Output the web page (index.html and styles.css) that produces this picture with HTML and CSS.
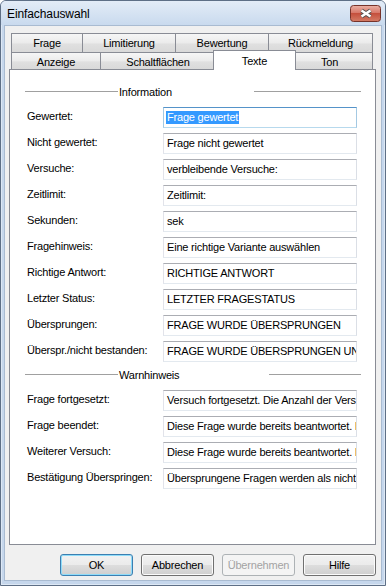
FILE: index.html
```html
<!DOCTYPE html>
<html>
<head>
    <title>Einfachauswahl</title>
    <link rel="stylesheet" href="styles.css">
</head>
<body>
<div class="window">
    <div class="titlebar">
        <span class="title">Einfachauswahl</span>
        <span class="close">
            <svg width="31" height="17" viewBox="0 0 31 17">
                <defs>
                    <linearGradient id="closebg" x1="0" y1="0" x2="0" y2="1">
                        <stop offset="0" stop-color="#eab1a5"/>
                        <stop offset="0.45" stop-color="#d8796a"/>
                        <stop offset="0.5" stop-color="#c5503d"/>
                        <stop offset="1" stop-color="#d47c66"/>
                    </linearGradient>
                </defs>
                <rect x="0.5" y="0.5" width="30" height="16" rx="3" fill="url(#closebg)" stroke="#76332a"/>
                <path d="M11.5 5.5 L20.5 11.5 M20.5 5.5 L11.5 11.5" stroke="#505050" stroke-width="4.4"/>
                <path d="M11.5 5.5 L20.5 11.5 M20.5 5.5 L11.5 11.5" stroke="#ffffff" stroke-width="2.6"/>
            </svg>
        </span>
    </div>
    <div class="dialog">
        <div class="tabs">
            <div class="tab-row back">
                <div class="tab">Frage</div>
                <div class="tab">Limitierung</div>
                <div class="tab">Bewertung</div>
                <div class="tab">Rückmeldung</div>
            </div>
            <div class="tab-row front">
                <div class="tab">Anzeige</div>
                <div class="tab">Schaltflächen</div>
                <div class="tab active">Texte</div>
                <div class="tab ton">Ton</div>
            </div>
        </div>
        <div class="panel">
            <div class="sep info">
                <span class="sep-line left"></span>
                <span class="sep-text">Information</span>
                <span class="sep-line right"></span>
            </div>
            <div class="fields">
                <label>Gewertet:</label>
                <div class="box focus"><span class="sel">Frage gewertet</span></div>
                <label>Nicht gewertet:</label>
                <div class="box">Frage nicht gewertet</div>
                <label>Versuche:</label>
                <div class="box">verbleibende Versuche:</div>
                <label>Zeitlimit:</label>
                <div class="box">Zeitlimit:</div>
                <label>Sekunden:</label>
                <div class="box">sek</div>
                <label>Fragehinweis:</label>
                <div class="box">Eine richtige Variante auswählen</div>
                <label>Richtige Antwort:</label>
                <div class="box">RICHTIGE ANTWORT</div>
                <label>Letzter Status:</label>
                <div class="box">LETZTER FRAGESTATUS</div>
                <label>Übersprungen:</label>
                <div class="box">FRAGE WURDE ÜBERSPRUNGEN</div>
                <label>Überspr./nicht bestanden:</label>
                <div class="box">FRAGE WURDE ÜBERSPRUNGEN UND NICHT BESTANDEN</div>
            </div>
            <div class="sep warn">
                <span class="sep-line left"></span>
                <span class="sep-text">Warnhinweis</span>
                <span class="sep-line right"></span>
            </div>
            <div class="fields">
                <label>Frage fortgesetzt:</label>
                <div class="box">Versuch fortgesetzt. Die Anzahl der Versuche wurde verringert.</div>
                <label>Frage beendet:</label>
                <div class="box">Diese Frage wurde bereits beantwortet. Ihre Antwort kann nicht geändert werden.</div>
                <label>Weiterer Versuch:</label>
                <div class="box">Diese Frage wurde bereits beantwortet. Ihre Antwort kann nicht geändert werden.</div>
                <label>Bestätigung Überspringen:</label>
                <div class="box">Übersprungene Fragen werden als nicht beantwortet gewertet.</div>
            </div>
        </div>
        <div class="buttons">
            <div class="btn default">OK</div>
            <div class="btn">Abbrechen</div>
            <div class="btn disabled">Übernehmen</div>
            <div class="btn">Hilfe</div>
        </div>
    </div>
</div>
</body>
</html>
```

FILE: styles.css
```css
body {
    margin: 0;
    background: #ffffff;
    font-family: "Liberation Sans", Arial, sans-serif;
    font-size: 11px;
    letter-spacing: -0.2px;
    color: #000000;
}
.window {
    width: 386px;
    height: 586px;
    box-sizing: border-box;
    border: 1px solid #5e6f86;
    border-radius: 6px 6px 0 0;
    background: #c6d7ec;
    box-shadow: inset 0 0 0 1px #dde8f5;
    display: flex;
    flex-direction: column;
    padding-bottom: 4px;
    overflow: hidden;
}
.titlebar {
    height: 24px;
    flex: none;
    display: flex;
    align-items: center;
    justify-content: space-between;
    padding: 0 4px 0 6px;
    background: linear-gradient(#e3ecf7, #c9daee);
}
.title {
    font-size: 12px;
    letter-spacing: -0.1px;
    padding-top: 1px;
}
.close {
    display: flex;
}
.dialog {
    flex: 1;
    margin: 0 3px;
    background: #f0f0f0;
    border: 1px solid #a9bbd1;
    display: flex;
    flex-direction: column;
    padding: 7px 5px 4px 4px;
    min-height: 0;
}
.tabs {
    margin: 0 3px 0 2px;
}
.tab-row {
    display: grid;
}
.tab-row.back {
    height: 19px;
    grid-template-columns: 71px 93px 93px 105px;
}
.tab-row.front {
    height: 17px;
    grid-template-columns: 89px 115px 79px 79px;
}
.tab {
    border: 1px solid #898c95;
    border-right: none;
    border-bottom: none;
    background: linear-gradient(#f6f6f6, #ebebeb 50%, #e0e0e0 55%, #d9d9d9);
    display: flex;
    align-items: center;
    justify-content: center;
    white-space: nowrap;
}
.tab:last-child {
    border-right: 1px solid #898c95;
}
.front .tab {
    padding-top: 1px;
}
.tab.active {
    position: relative;
    z-index: 1;
    margin: -2px -2px -1px;
    background: #ffffff;
    border-right: 1px solid #898c95;
    padding-top: 0;
}
.tab.ton {
    padding-right: 8px;
}
.panel {
    flex: 1;
    background: #ffffff;
    border: 1px solid #898c95;
    padding-top: 15px;
}
.sep {
    display: flex;
    align-items: center;
    height: 13px;
    margin: 0 14px 9px 15px;
}
.sep.warn {
    margin-top: 6px;
}
.sep-line {
    height: 1px;
    background: #a0a0a0;
}
.sep-line.left {
    width: 93px;
    margin-right: 1px;
}
.sep-line.right {
    margin-left: auto;
}
.info .sep-line.right {
    width: 107px;
}
.warn .sep-line.right {
    width: 92px;
}
.fields {
    display: grid;
    grid-template-columns: 136px 194px;
    row-gap: 5px;
    padding-left: 17px;
}
.fields label {
    line-height: 19px;
    white-space: nowrap;
}
.box {
    height: 21px;
    box-sizing: border-box;
    border: 1px solid;
    border-color: #abadb3 #dbdfe6 #e3e9ef #e2e3ea;
    background: #ffffff;
    padding: 0 0 0 3px;
    line-height: 19px;
    white-space: nowrap;
    overflow: hidden;
}
.box.focus {
    border-color: #5593c9 #a4c9e3 #b7d9ed #a4c9e3;
    padding-left: 2px;
}
.sel {
    display: inline-block;
    background: #3399ff;
    color: #ffffff;
    line-height: 13px;
    padding: 0 1px;
    vertical-align: middle;
    margin-top: -2px;
}
.buttons {
    display: flex;
    justify-content: flex-end;
    gap: 8px;
    margin-top: 9px;
}
.btn {
    width: 73px;
    height: 22px;
    box-sizing: border-box;
    border: 1px solid #707070;
    border-radius: 3px;
    background: linear-gradient(#f2f2f2, #ebebeb 50%, #dddddd 51%, #cfcfcf);
    box-shadow: inset 0 0 0 1px #fbfbfb;
    display: flex;
    align-items: center;
    justify-content: center;
}
.btn.default {
    border-color: #3c7fb1;
    box-shadow: inset 0 0 0 1px #8fdcf9;
}
.btn.disabled {
    color: #a3a3a3;
    border-color: #adb2b5;
    background: #f4f4f4;
    box-shadow: none;
}
```
